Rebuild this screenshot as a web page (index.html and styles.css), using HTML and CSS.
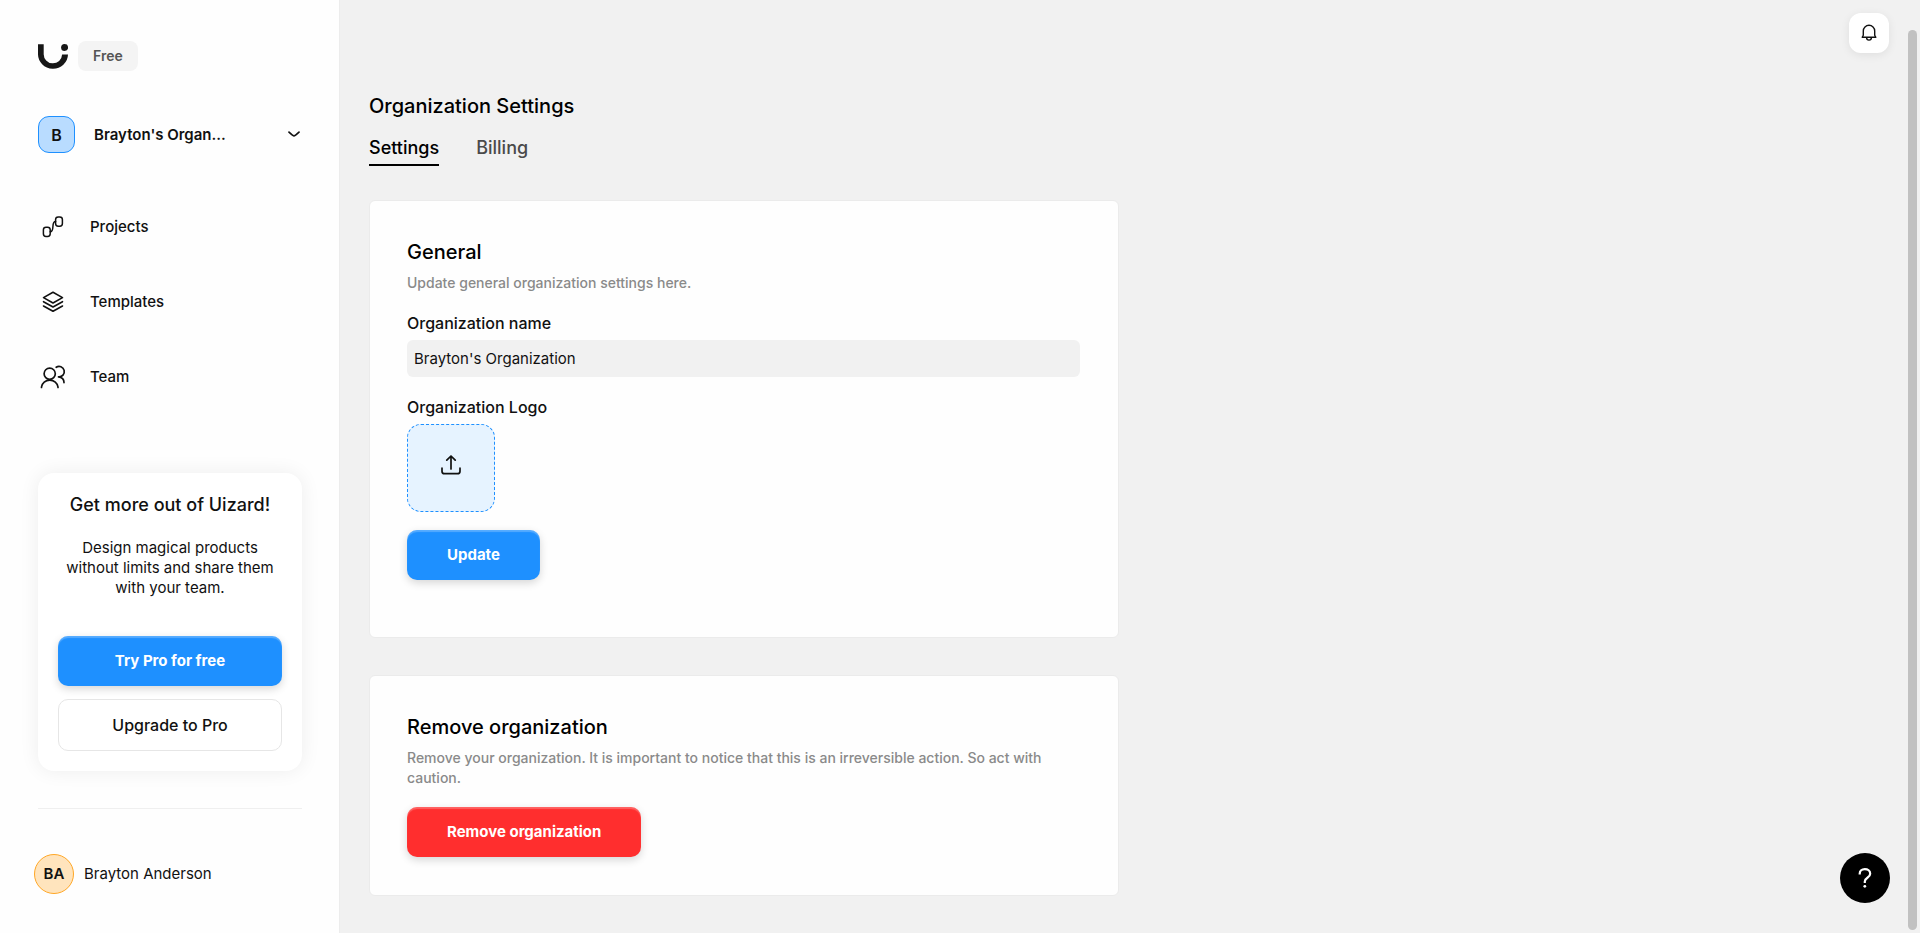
FILE: index.html
```html
<!DOCTYPE html>
<html lang="en">
<head>
<meta charset="utf-8">
<meta name="viewport" content="width=device-width, initial-scale=1">
<title>Organization Settings</title>
<link rel="stylesheet" href="styles.css">
</head>
<body>
<div class="app">
  <aside class="sidebar">
    <div class="brand">
      <svg class="brand-logo" width="30" height="25" viewBox="0 0 30 25" aria-label="Uizard" role="img">
        <path d="M0 .3H5.7V9.8A9.2 9.2 0 0 0 24.1 10.5H30A15 14.5 0 0 1 0 9.8Z" fill="#171717"/>
        <circle cx="26.6" cy="3.5" r="3.5" fill="#171717"/>
      </svg>
      <span class="plan">Free</span>
    </div>

    <button class="org-switch" type="button">
      <span class="org-avatar">B</span>
      <span class="org-name">Brayton's Organ...</span>
      <svg width="12" height="7" viewBox="0 0 12 7" fill="none" stroke="#111" stroke-width="1.7" stroke-linecap="round" stroke-linejoin="round"><path d="M1 1.2Q5 5 6 5T11 1.2"/></svg>
    </button>

    <nav class="nav">
      <a class="nav-link" href="#projects">
        <svg width="30" height="30" viewBox="0 0 30 30" fill="none" stroke="#111" stroke-width="1.5" stroke-linecap="round" stroke-linejoin="round">
          <rect x="5.4" y="15.2" width="6.8" height="9.2" rx="2.6"/>
          <rect x="17.6" y="5" width="6.8" height="9.2" rx="2.6"/>
          <path d="M12.2 19.8C17.200 19.8 12.600 9.600 17.6 9.6"/>
        </svg>
        <span>Projects</span>
      </a>
      <a class="nav-link" href="#templates">
        <svg width="30" height="30" viewBox="0 0 30 30" fill="none" stroke="#111" stroke-width="1.6" stroke-linecap="round" stroke-linejoin="round">
          <path d="M15 5.2 24.500 10.600 15 16 5.500 10.600Z"/>
          <path d="M5.500 14.700 15 20 24.500 14.700M5.500 19 15 24.300 24.500 19"/>
        </svg>
        <span>Templates</span>
      </a>
      <a class="nav-link" href="#team">
        <svg width="30" height="30" viewBox="0 0 30 30" fill="none" stroke="#111" stroke-width="1.700" stroke-linecap="round" stroke-linejoin="round">
          <circle cx="11.700" cy="11.700" r="5.600"/>
          <path d="M3.500 25.500V25A8.300 7.700 0 0 1 20 25V25.500"/>
          <path d="M18.200 5.300A5.200 5.200 0 1 1 20.500 14.800C23.900 15.300 26 17.400 26 20.600"/>
        </svg>
        <span>Team</span>
      </a>
    </nav>

    <section class="promo">
      <h2 class="promo-title">Get more out of Uizard!</h2>
      <p class="promo-text">Design magical products without limits and share them with your team.</p>
      <button class="btn btn-primary" type="button">Try Pro for free</button>
      <button class="btn btn-outline" type="button">Upgrade to Pro</button>
    </section>

    <button class="user" type="button">
      <span class="user-avatar">BA</span>
      <span>Brayton Anderson</span>
    </button>
  </aside>

  <main class="main">
    <h1 class="page-title">Organization Settings</h1>
    <nav class="tabs">
      <a class="tab tab-active" href="#settings">Settings</a>
      <a class="tab" href="#billing">Billing</a>
    </nav>

    <form class="card card-general">
      <h2 class="card-title">General</h2>
      <p class="card-text">Update general organization settings here.</p>
      <label class="label" for="org-name">Organization name</label>
      <input class="input" id="org-name" type="text" value="Brayton's Organization">
      <label class="label" for="org-logo">Organization Logo</label>
      <button class="upload" id="org-logo" type="button" aria-label="Upload logo">
        <svg width="20" height="20" viewBox="0 0 20 20" fill="none" stroke="#111" stroke-width="1.700" stroke-linecap="round" stroke-linejoin="round">
          <path d="M10 14V1.200M5.800 5.200 10 1 14.200 5.200M1 13.200V16.200Q1 18.700 3.500 18.700H16.500Q19 18.700 19 16.200V13.200"/>
        </svg>
      </button>
      <button class="btn btn-primary" type="button">Update</button>
    </form>

    <section class="card">
      <h2 class="card-title">Remove organization</h2>
      <p class="card-text">Remove your organization. It is important to notice that this is an irreversible action. So act with caution.</p>
      <button class="btn btn-danger" type="button">Remove organization</button>
    </section>
  </main>
</div>

<button class="bell" type="button" aria-label="Notifications">
  <svg width="16" height="18" viewBox="0 0 16 18" fill="none" stroke="#111" stroke-width="1.400" stroke-linejoin="round">
    <path d="M1.200 13.300 2.300 11.200V7A5.700 5.700 0 0 1 13.700 7V11.200L14.800 13.300ZM5.600 13.500A2.400 2.600 0 0 0 10.400 13.500"/>
  </svg>
</button>
<button class="help" type="button" aria-label="Help">
  <svg width="14" height="20" viewBox="0 0 14 20" fill="none" stroke="#fff" stroke-width="2.200">
    <path d="M1.700 6.500V5.700C1.700 3 3.800 1.200 6.800 1.200S12.200 3 12.200 5.700C12.200 10 6.800 9.500 6.800 13.500V15"/>
    <circle cx="6.800" cy="18.300" r="1.400" fill="#fff" stroke="none"/>
  </svg>
</button>
<div class="scroll-thumb"></div>
</body>
</html>
```
FILE: styles.css
```css
* { box-sizing: border-box; }

body {
  margin: 0;
  background: #f1f1f1;
  color: #111;
  font-family: Inter, "Liberation Sans", sans-serif;
  font-size: 15px;
  line-height: 20px;
}

button, input { font: inherit; color: inherit; }
button { cursor: pointer; }
h1, h2, p { margin: 0; }
a { color: inherit; text-decoration: none; }
svg { display: block; flex: none; }

.app {
  display: grid;
  grid-template-columns: 340px 1fr;
  min-height: 100vh;
}

.sidebar {
  display: flex;
  flex-direction: column;
  padding: 41px 37px 39px 38px;
  background: #fefefe;
  border-right: 1px solid #ececec;
}

.brand { display: flex; align-items: center; gap: 10px; }

.plan {
  padding: 5px 15px;
  border-radius: 8px;
  background: #f4f4f4;
  color: #555;
  font-size: 14px;
  font-weight: 600;
}

.org-switch {
  display: flex;
  align-items: center;
  margin-top: 45px;
  padding: 0 2px 0 0;
  border: 0;
  background: none;
  font-weight: 600;
  text-align: left;
}

.org-avatar {
  display: grid;
  place-items: center;
  width: 37px;
  height: 37px;
  margin-right: 19px;
  border: 1px solid #1e90ff;
  border-radius: 11px;
  background: #b9dcff;
  font-size: 16px;
}

.org-name { flex: 1; }

.nav {
  display: flex;
  flex-direction: column;
  gap: 45px;
  margin-top: 59px;
}

.nav-link {
  display: flex;
  align-items: center;
  gap: 22px;
  font-weight: 500;
}

.promo {
  display: flex;
  flex-direction: column;
  margin-top: 81px;
  padding: 20px;
  border-radius: 16px;
  background: #fff;
  box-shadow: 0 0 20px rgba(0, 0, 0, 0.07);
  text-align: center;
}

.promo-title { font-size: 18px; font-weight: 500; line-height: 24px; }
.promo-text { margin: 21px 0 38px; }

.btn {
  height: 50px;
  padding: 0 40px;
  border: 0;
  border-radius: 10px;
  font-weight: 500;
}

.btn-primary,
.btn-danger {
  color: #fff;
  font-weight: 700;
  box-shadow: 0 3px 8px rgba(0, 0, 0, 0.16), inset 0 2px 1px rgba(255, 255, 255, 0.25);
}

.btn-primary { background: #1e90ff; }
.btn-danger { background: #ff2e2e; }

.btn-outline {
  height: 52px;
  margin-top: 13px;
  border: 1px solid #e6e6e6;
  background: #fff;
  font-size: 16px;
}

.user {
  display: flex;
  align-items: center;
  gap: 10px;
  margin-top: 37px;
  padding: 45px 0 0;
  border: 0;
  border-top: 1px solid #efefef;
  background: none;
}

.user-avatar {
  display: grid;
  place-items: center;
  width: 40px;
  height: 40px;
  margin-left: -4px;
  border: 1px solid #ffa726;
  border-radius: 50%;
  background: #ffe4bd;
  font-weight: 600;
}

.main { padding: 92px 29px 37px; }

.page-title { font-size: 20px; font-weight: 500; line-height: 28px; color: #000; }

.tabs { display: flex; gap: 37px; margin-top: 17px; }

.tab {
  padding-bottom: 5px;
  border-bottom: 2px solid transparent;
  color: #4a4a4a;
  font-size: 18px;
  font-weight: 500;
  line-height: 22px;
}

.tab-active { border-color: #000; color: #000; }

.card {
  display: flex;
  flex-direction: column;
  align-items: flex-start;
  max-width: 750px;
  margin-top: 37px;
  padding: 37px 38px 38px 37px;
  border: 1px solid #ebebeb;
  border-radius: 6px;
  background: #fefefe;
}

.tabs + .card { margin-top: 34px; }
.card-general { padding-bottom: 57px; }

.card-title { font-size: 20px; font-weight: 500; line-height: 28px; color: #000; }

.card-text {
  margin: 7px 0 19px;
  color: #8a8a8a;
  font-size: 14px;
  font-weight: 500;
}

.label { margin-bottom: 7px; font-size: 16px; font-weight: 500; }
.card-text + .label { margin-top: 1px; }

.input {
  width: 100%;
  height: 37px;
  margin-bottom: 20px;
  padding: 0 7px;
  border: 0;
  border-radius: 6px;
  background: #f1f1f1;
}

.upload {
  display: grid;
  place-items: center;
  width: 88px;
  height: 88px;
  margin-bottom: 18px;
  padding: 0 0 6px;
  border: 1px dashed #1e90ff;
  border-radius: 14px;
  background: #e6f3ff;
}

.bell,
.help {
  position: fixed;
  display: grid;
  place-items: center;
  padding: 0;
  border: 0;
}

.bell {
  top: 13px;
  right: 31px;
  width: 40px;
  height: 40px;
  border-radius: 12px;
  background: #fff;
  box-shadow: 0 2px 10px rgba(0, 0, 0, 0.08);
}

.help {
  right: 30px;
  bottom: 30px;
  width: 50px;
  height: 50px;
  border-radius: 50%;
  background: #000;
}

.scroll-thumb {
  position: fixed;
  top: 30px;
  right: 3px;
  bottom: 3px;
  width: 9px;
  border-radius: 5px;
  background: #c1c1c1;
}
```
